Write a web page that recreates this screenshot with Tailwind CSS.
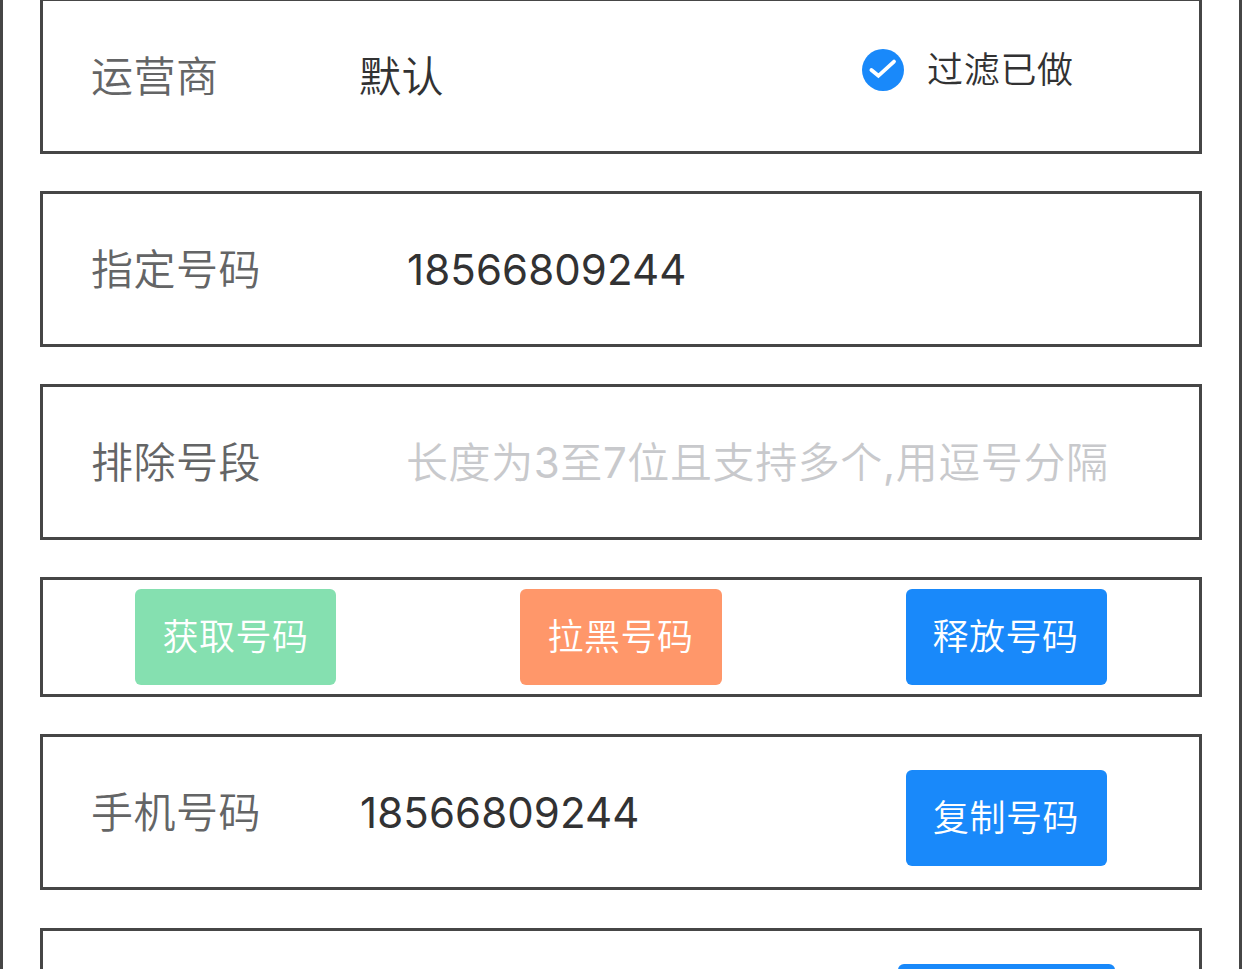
<!DOCTYPE html>
<html lang="zh-CN">
<head>
<meta charset="utf-8">
<title>号码</title>
<script src="https://cdn.jsdelivr.net/npm/@tailwindcss/browser@4"></script>
</head>
<body class="bg-white">
<main class="w-[1242px] h-[969px] overflow-hidden border-x-[3px] border-[#464646] px-[37px] flex flex-col font-[Inter,'Noto_Sans_CJK_SC',sans-serif] font-[350] text-[42px] leading-[60px] tracking-[0.5px] text-[#323233] whitespace-nowrap">
  <section class="h-[156px] -mt-[2px] shrink-0 border-[3px] border-[#464646] flex pl-[48px]">
    <div class="w-[268px] pt-[46px] text-[#646566]">运营商</div>
    <div class="w-[503px] pt-[46px]">默认</div>
    <div class="flex items-center h-[60px] mt-[39px] text-[36px] tracking-[0.7px]">
      <svg class="size-[42px] mr-[23px]" viewBox="0 0 42 42" fill="none"><circle cx="21" cy="21" r="21" fill="#1989fa"/><path d="M9.4 21L16.4 26.8L32 12.6" stroke="#fff" stroke-width="3.8" stroke-linecap="round"/></svg>
      <span>过滤已做</span>
    </div>
  </section>
  <section class="h-[156px] mt-[37px] shrink-0 border-[3px] border-[#464646] flex pl-[48px] pt-[46px]">
    <div class="w-[316px] text-[#646566]">指定号码</div>
    <div class="font-normal tracking-[0.1px]">18566809244</div>
  </section>
  <section class="h-[156px] mt-[37px] shrink-0 border-[3px] border-[#464646] flex pl-[48px] pt-[46px]">
    <div class="w-[315px] text-[#646566]">排除号段</div>
    <div class="text-[#c8c9cc] tracking-[0.6px]">长度为<span class="font-normal">3</span>至<span class="font-normal">7</span>位且支持多个<span class="font-normal">,</span>用逗号分隔</div>
  </section>
  <section class="h-[120px] mt-[37px] shrink-0 border-[3px] border-[#464646] flex pl-[92px] pt-[9px] gap-[184px] text-[36px] text-white">
    <button class="w-[201px] h-[96px] rounded-[6px] bg-[#85e0b0] tracking-[0.5px]">获取号码</button>
    <button class="w-[202px] h-[96px] rounded-[6px] bg-[#ff976a] pr-px tracking-[0.5px]">拉黑号码</button>
    <button class="w-[201px] h-[96px] rounded-[6px] bg-[#1989fa] pr-[2px] tracking-[0.5px]">释放号码</button>
  </section>
  <section class="h-[156px] mt-[37px] shrink-0 border-[3px] border-[#464646] flex pl-[48px]">
    <div class="w-[269px] pt-[46px] text-[#646566]">手机号码</div>
    <div class="w-[546px] pt-[46px] font-normal tracking-[0.1px]">18566809244</div>
    <button class="w-[201px] h-[96px] mt-[33px] rounded-[6px] bg-[#1989fa] text-[36px] text-white pr-px tracking-[0.5px]">复制号码</button>
  </section>
  <section class="h-[156px] mt-[38px] shrink-0 border-[3px] border-[#464646] flex pl-[855px] pt-[33px]">
    <div class="w-[217px] h-[96px] rounded-[6px] bg-[#1989fa]"></div>
  </section>
</main>
</body>
</html>
